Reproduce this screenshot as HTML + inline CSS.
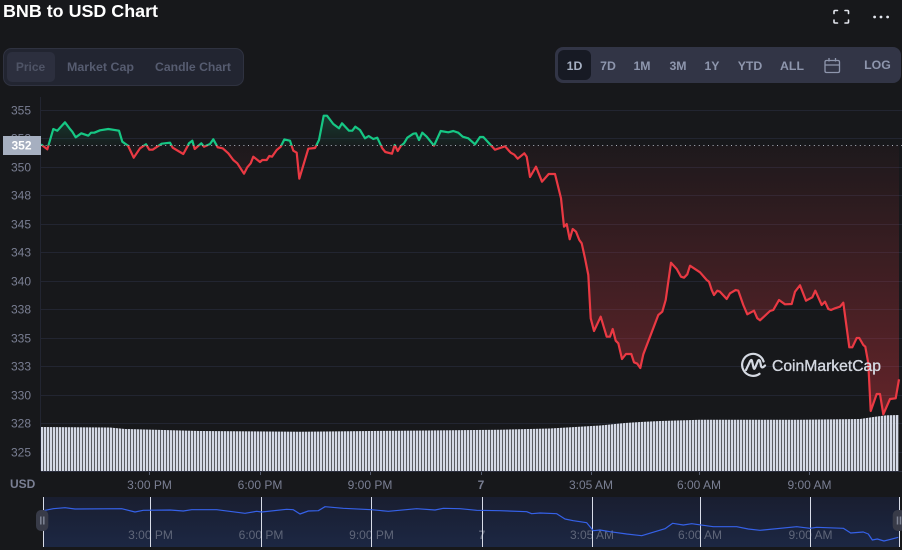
<!DOCTYPE html>
<html lang="en">
<head>
<meta charset="utf-8">
<title>BNB to USD Chart</title>
<style>
html,body{margin:0;padding:0;background:#17181b;width:902px;height:550px;overflow:hidden}
svg{display:block;font-family:"Liberation Sans",sans-serif}
.y{font-size:12px;fill:#7a7f93}
.x{font-size:12px;fill:#7a7f93;text-anchor:middle}
.n{font-size:12px;fill:#5f6679;text-anchor:middle}
.b{font-size:12.3px;font-weight:700;fill:#8e96ad;text-anchor:middle}
.t{font-size:12px;font-weight:700;fill:#565c70;text-anchor:middle}
</style>
</head>
<body>
<svg width="902" height="550" viewBox="0 0 902 550" xmlns="http://www.w3.org/2000/svg">
<defs>
<linearGradient id="red" gradientUnits="userSpaceOnUse" x1="0" y1="145" x2="0" y2="414">
<stop offset="0" stop-color="#ea3943" stop-opacity="0.03"/>
<stop offset="1" stop-color="#ea3943" stop-opacity="0.36"/>
</linearGradient>
<linearGradient id="green" gradientUnits="userSpaceOnUse" x1="0" y1="145.5" x2="0" y2="115">
<stop offset="0" stop-color="#16c784" stop-opacity="0.03"/>
<stop offset="1" stop-color="#16c784" stop-opacity="0.2"/>
</linearGradient>
<linearGradient id="nav" x1="0" y1="0" x2="0" y2="1">
<stop offset="0" stop-color="#191e30"/>
<stop offset="1" stop-color="#1c2743"/>
</linearGradient>
<clipPath id="above"><rect x="41" y="90" width="861" height="55.5"/></clipPath>
<clipPath id="below"><rect x="41" y="145.5" width="861" height="300"/></clipPath>
<clipPath id="vol"><polygon points="41,427 110,427.5 125,429 200,431 300,431.7 400,430.7 500,429.7 550,428.5 575,427 600,425.5 625,423 640,422 660,421 700,419.7 800,419.7 860,419 875,416.7 887,415.3 899,415 899,471 41,471"/></clipPath>
<path id="area" d="M41,145.5 L41,144.3 47.3,149.3 53.3,129 57.3,130.7 65,122.3 70,129 72.3,131.7 75.7,137.3 81.3,133.3 88.3,135.7 91,132.7 94.3,132.7 100,130.3 108.3,129 119,130.7 122.3,141.7 128,145.7 133.7,157.7 140,148.3 146,144.3 149.3,149.7 152.7,149.7 161.7,143.7 170,142.7 172.7,147.7 183.3,154 187.3,146.7 189,143.3 192.3,140.7 194.7,149 201.3,143.3 204,146.7 210,144 213.3,139.3 217.7,147.3 222.7,148.3 228.3,153.3 233.3,160 237.3,163.3 244,173.7 247.3,167.3 250.7,163.3 253.3,156.7 260,162 262.3,160 266.7,160 269.3,156 272,156.7 276.7,150 280.7,146.7 284.3,139.5 290,140.7 293.3,150.7 296.7,152.7 299.3,178.7 308.3,148.7 315,148 319,140 323.7,115.7 327,115.7 333.3,124 339,128.3 342,123.3 349,130.7 352.3,130.7 355.3,126.7 360,130 365,138.3 368.7,136 373.3,139 377.3,137.7 382.3,148.3 385.3,152 392,153.7 394.7,145 397.7,151 401,145.7 404,143.3 407.3,137.7 413.3,133.7 416,133.3 419,140 422.3,132.7 426.7,136.7 434,145.7 440.7,131 448.3,132.3 453.3,131 458.3,132.7 462.7,136.7 468.3,138.3 475,144.3 480,137 483.3,137 495,149.7 505,146.3 510.7,152.7 514.3,154.7 517.7,158.7 524.3,153.3 526.7,156.7 530,177 536,166.7 542,181.7 548.7,174 555,174 561,198.3 564,226.7 566.7,224 569.7,239.3 572.7,229 576,231.7 579.3,240 581.7,243.3 585,258.3 588.3,275 590.7,318.3 594,331 600.7,316.7 606.7,336.7 610,336.7 612.7,329 615.7,340.7 618.3,343.3 622,359 626,354 631.3,354 634,362.3 637.3,363.7 640.3,368 643.3,354.3 658.3,315 662.3,311.7 665.7,300 671,262.7 676.7,269 681,276.7 684,277.7 687.3,274.3 690,265.7 700,272.3 706.7,280 709,281.7 711.7,290 714,295 717.3,290.7 720,291.7 726.7,299 730,293.3 735.7,290 738.3,290.7 743.3,305 747.3,314.3 754,310.7 757.3,318.3 760,320.3 770,311 773.3,310 779,300 785,304.3 791.7,304 795,291.7 800,285.3 806,300.7 812.3,297.3 815.3,290.7 821.7,305 825,301.7 828.3,309 831,310 835,308.3 840,306.7 843.3,302.7 849.3,347.3 852.3,347.3 856.7,338 859.3,338 863.3,345 865.3,346.7 868.3,363.3 870.7,411 876.7,394 880,394 883.3,414.3 890,399 895.7,398.3 899,379.3 L899,145.5 Z"/>
<polyline id="line" fill="none" stroke-width="2.2" stroke-linejoin="round" points="41,144.3 47.3,149.3 53.3,129 57.3,130.7 65,122.3 70,129 72.3,131.7 75.7,137.3 81.3,133.3 88.3,135.7 91,132.7 94.3,132.7 100,130.3 108.3,129 119,130.7 122.3,141.7 128,145.7 133.7,157.7 140,148.3 146,144.3 149.3,149.7 152.7,149.7 161.7,143.7 170,142.7 172.7,147.7 183.3,154 187.3,146.7 189,143.3 192.3,140.7 194.7,149 201.3,143.3 204,146.7 210,144 213.3,139.3 217.7,147.3 222.7,148.3 228.3,153.3 233.3,160 237.3,163.3 244,173.7 247.3,167.3 250.7,163.3 253.3,156.7 260,162 262.3,160 266.7,160 269.3,156 272,156.7 276.7,150 280.7,146.7 284.3,139.5 290,140.7 293.3,150.7 296.7,152.7 299.3,178.7 308.3,148.7 315,148 319,140 323.7,115.7 327,115.7 333.3,124 339,128.3 342,123.3 349,130.7 352.3,130.7 355.3,126.7 360,130 365,138.3 368.7,136 373.3,139 377.3,137.7 382.3,148.3 385.3,152 392,153.7 394.7,145 397.7,151 401,145.7 404,143.3 407.3,137.7 413.3,133.7 416,133.3 419,140 422.3,132.7 426.7,136.7 434,145.7 440.7,131 448.3,132.3 453.3,131 458.3,132.7 462.7,136.7 468.3,138.3 475,144.3 480,137 483.3,137 495,149.7 505,146.3 510.7,152.7 514.3,154.7 517.7,158.7 524.3,153.3 526.7,156.7 530,177 536,166.7 542,181.7 548.7,174 555,174 561,198.3 564,226.7 566.7,224 569.7,239.3 572.7,229 576,231.7 579.3,240 581.7,243.3 585,258.3 588.3,275 590.7,318.3 594,331 600.7,316.7 606.7,336.7 610,336.7 612.7,329 615.7,340.7 618.3,343.3 622,359 626,354 631.3,354 634,362.3 637.3,363.7 640.3,368 643.3,354.3 658.3,315 662.3,311.7 665.7,300 671,262.7 676.7,269 681,276.7 684,277.7 687.3,274.3 690,265.7 700,272.3 706.7,280 709,281.7 711.7,290 714,295 717.3,290.7 720,291.7 726.7,299 730,293.3 735.7,290 738.3,290.7 743.3,305 747.3,314.3 754,310.7 757.3,318.3 760,320.3 770,311 773.3,310 779,300 785,304.3 791.7,304 795,291.7 800,285.3 806,300.7 812.3,297.3 815.3,290.7 821.7,305 825,301.7 828.3,309 831,310 835,308.3 840,306.7 843.3,302.7 849.3,347.3 852.3,347.3 856.7,338 859.3,338 863.3,345 865.3,346.7 868.3,363.3 870.7,411 876.7,394 880,394 883.3,414.3 890,399 895.7,398.3 899,379.3"/>
</defs>

<rect width="902" height="550" fill="#17181b"/>

<!-- title -->
<text x="3" y="17" font-size="17.5" font-weight="700" fill="#ffffff" textLength="155" lengthAdjust="spacingAndGlyphs">BNB to USD Chart</text>

<!-- fullscreen icon -->
<path d="M834,13.5V11.5Q834,10.5 835,10.5H837.5M845,10.5H847.5Q848.5,10.5 848.5,11.5V13.5M848.5,20V22Q848.5,23 847.5,23H845M837.5,23H835Q834,23 834,22V20" fill="none" stroke="#e3e6ee" stroke-width="1.6" stroke-linecap="round"/>
<circle cx="874.6" cy="17" r="1.4" fill="#e3e6ee"/><circle cx="881" cy="17" r="1.4" fill="#e3e6ee"/><circle cx="887.6" cy="17" r="1.4" fill="#e3e6ee"/>

<!-- left pill -->
<rect x="3.5" y="48.5" width="240" height="37" rx="8" fill="#222531" stroke="#2f3240"/>
<rect x="7" y="52" width="48" height="30" rx="5" fill="#2c2f3e"/>
<text class="t" x="30.5" y="71" style="fill:#4f5466">Price</text>
<text class="t" x="100.5" y="71" textLength="67" lengthAdjust="spacingAndGlyphs">Market Cap</text>
<text class="t" x="193" y="71" textLength="76" lengthAdjust="spacingAndGlyphs">Candle Chart</text>

<!-- right pill -->
<rect x="555" y="47" width="346" height="36" rx="8" fill="#323546"/>
<rect x="558" y="50" width="33" height="30" rx="6" fill="#171a24"/>
<text class="b" x="574.5" y="70" style="fill:#a6b0c3">1D</text>
<text class="b" x="608" y="70">7D</text>
<text class="b" x="642" y="70">1M</text>
<text class="b" x="678" y="70">3M</text>
<text class="b" x="712" y="70">1Y</text>
<text class="b" x="750" y="70">YTD</text>
<text class="b" x="792" y="70">ALL</text>
<text class="b" x="877.5" y="69">LOG</text>
<path d="M826.5,60.5H838Q839.5,60.5 839.5,62V71Q839.5,72.5 838,72.5H826.5Q825,72.5 825,71V62Q825,60.5 826.5,60.5ZM825,65H839.5M829,58V61.5M835.5,58V61.5" fill="none" stroke="#8e96ad" stroke-width="1.3"/>

<!-- grid -->
<g stroke="#222531" stroke-width="1">
<path d="M41 110.5H902M41 138.5H902M41 167.5H902M41 195.5H902M41 224.5H902M41 252.5H902M41 281.5H902M41 309.5H902M41 338.5H902M41 366.5H902M41 395.5H902M41 423.5H902M41 452.5H902"/>
<path d="M40.5 97V471"/>
</g>

<!-- y labels -->
<text class="y" x="11" y="114.5">355</text>
<text class="y" x="11" y="142.5">352</text>
<text class="y" x="11" y="171.5">350</text>
<text class="y" x="11" y="199.5">348</text>
<text class="y" x="11" y="228.5">345</text>
<text class="y" x="11" y="256.5">343</text>
<text class="y" x="11" y="285.5">340</text>
<text class="y" x="11" y="313.5">338</text>
<text class="y" x="11" y="342.5">335</text>
<text class="y" x="11" y="370.5">333</text>
<text class="y" x="11" y="399.5">330</text>
<text class="y" x="11" y="427.5">328</text>
<text class="y" x="11" y="456.5">325</text>

<!-- area & line -->
<use href="#area" fill="url(#red)" clip-path="url(#below)"/>
<use href="#area" fill="url(#green)" clip-path="url(#above)"/>
<use href="#line" stroke="#ea3943" clip-path="url(#below)"/>
<use href="#line" stroke="#16c784" clip-path="url(#above)"/>

<!-- baseline dotted -->
<path d="M41 145.5H902" stroke="#aeb3be" stroke-width="1" stroke-dasharray="1 3.6"/>

<!-- price label -->
<rect x="3" y="136" width="38" height="19" fill="#a6afc0"/>
<text x="21.5" y="149.5" font-size="12" font-weight="700" fill="#ffffff" text-anchor="middle">352</text>

<!-- watermark -->
<path d="M763.6,361.5A11,11 0 1 0 759.5,373.8" fill="none" stroke="#d5d9e2" stroke-width="2.2" stroke-linecap="round"/>
<path d="M746,370L750.3,360.8Q751.5,359 752,361L753.5,367.5Q754,370 755,368L758,360.8Q759,359 760,361L761,366Q762,369 765,365.5" fill="none" stroke="#d5d9e2" stroke-width="2.2" stroke-linecap="round" stroke-linejoin="round"/>
<text x="772" y="371" font-size="16" fill="#d5d9e2" stroke="#d5d9e2" stroke-width="0.35" textLength="109" lengthAdjust="spacingAndGlyphs">CoinMarketCap</text>

<!-- volume bars -->
<g clip-path="url(#vol)">
<path d="M41 443H899" stroke="#d4d9e6" stroke-width="60" stroke-dasharray="2.35 0.65"/>
</g>
<path d="M41 471.5H902" stroke="#2b2e3d"/>

<!-- x ticks -->
<path d="M149.5 472V475M260.5 472V475M370.5 472V475M481.5 472V475M591.5 472V475M699.5 472V475M809.5 472V475" stroke="#565c6e"/>

<!-- x labels -->
<text x="10" y="488" font-size="12" font-weight="700" fill="#7a7f93">USD</text>
<text class="x" x="149.5" y="489">3:00 PM</text>
<text class="x" x="260" y="489">6:00 PM</text>
<text class="x" x="370" y="489">9:00 PM</text>
<text class="x" x="481" y="489" font-weight="700">7</text>
<text class="x" x="591" y="489">3:05 AM</text>
<text class="x" x="699" y="489">6:00 AM</text>
<text class="x" x="809.5" y="489">9:00 AM</text>

<!-- navigator -->
<rect x="43" y="497" width="857" height="50" fill="url(#nav)"/>
<text class="n" x="150.5" y="539">3:00 PM</text>
<text class="n" x="261" y="539">6:00 PM</text>
<text class="n" x="371.5" y="539">9:00 PM</text>
<text class="n" x="482" y="539" font-weight="700">7</text>
<text class="n" x="592" y="539">3:05 AM</text>
<text class="n" x="700" y="539">6:00 AM</text>
<text class="n" x="810.5" y="539">9:00 AM</text>
<path d="M43.5 497V547M150.5 497V547M261.5 497V547M371.5 497V547M482.5 497V547M592.5 497V547M700.5 497V547M810.5 497V547M899.5 497V547" stroke="#d8dce8"/>
<polyline fill="none" stroke="#3561e8" stroke-width="1.2" stroke-linejoin="round" points="43.3,510.7 53.3,508.7 65,507.7 75,509 121.7,508.7 135,512 143.3,510.3 170,510 183.3,511 191.7,509.7 216.7,509.7 245,513.3 256.7,511.3 261.7,512 286.7,509.3 293.3,509.7 300,514 308.3,511 318.3,510.7 325,506.7 343.3,508.3 371.3,509.7 388.3,511.3 416.7,508.7 435,510 443.3,508.3 460,508.7 476.7,510.3 500,510.7 526.7,511.7 531.7,513.7 540,513 556.7,513.7 565,519 573.3,520.7 586.7,522.7 593.3,530.7 600,530 610,531.7 626.7,534 641.7,535.7 665,528.7 672.7,523.3 683.3,525 691.7,523.7 713.3,526.7 736.7,526.7 748.3,529 760,530.3 796.7,526.7 810,528.3 816.7,527.3 843.3,528.3 850.7,533 863.3,532 868.3,534 872.3,540 877.3,539 884,541 898.3,537.3"/>
<rect x="36" y="510" width="12.3" height="21" rx="5" fill="#383b48"/>
<path d="M40.8 516.5V524.5M43.8 516.5V524.5" stroke="#7e8494" stroke-width="1.5"/>
<rect x="892.7" y="510" width="12.3" height="21" rx="5" fill="#383b48"/>
<path d="M897.5 516.5V524.5M900.5 516.5V524.5" stroke="#7e8494" stroke-width="1.5"/>
</svg>
</body>
</html>
